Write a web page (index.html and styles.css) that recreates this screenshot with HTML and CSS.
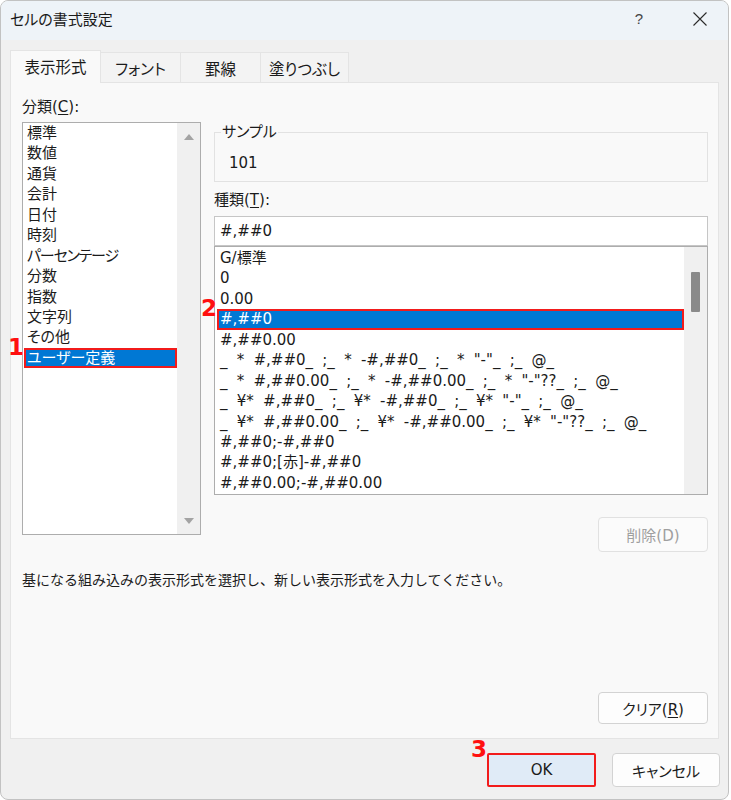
FILE: index.html
```html
<!DOCTYPE html>
<html lang="ja">
<head>
<meta charset="utf-8">
<title>セルの書式設定</title>
<link rel="stylesheet" href="styles.css">
</head>
<body>
<div class="window">
  <div class="titlebar">
    <div class="title">セルの書式設定</div>
    <div class="help">?</div>
    <svg class="close" viewBox="0 0 14 14" width="14" height="14"><path d="M0.5 0.5 L13.5 13.5 M13.5 0.5 L0.5 13.5" stroke="#2b2b2b" stroke-width="1.1" fill="none"/></svg>
  </div>
  <div class="tabs">
    <div class="tab active w1">表示形式</div>
    <div class="tab w2">フォント</div>
    <div class="tab w3">罫線</div>
    <div class="tab w4">塗りつぶし</div>
  </div>
  <div class="panel">
    <div class="main">
      <div class="leftcol">
        <div class="label">分類(<u>C</u>):</div>
        <div class="listbox left">
          <div class="items">
            <div class="item">標準</div>
            <div class="item">数値</div>
            <div class="item">通貨</div>
            <div class="item">会計</div>
            <div class="item">日付</div>
            <div class="item">時刻</div>
            <div class="item kana">パーセンテージ</div>
            <div class="item">分数</div>
            <div class="item">指数</div>
            <div class="item">文字列</div>
            <div class="item">その他</div>
            <div class="item selected"><span class="ann one">1</span>ユーザー定義</div>
          </div>
          <div class="scroll arrows">
            <span class="tri up"></span>
            <span class="tri down"></span>
          </div>
        </div>
      </div>
      <div class="rightcol">
        <div class="sample">
          <div class="legend">サンプル</div>
          <div class="sample-value">101</div>
        </div>
        <div class="label kind">種類(<u>T</u>):</div>
        <div class="input">#,##0</div>
        <div class="listbox fmt">
          <div class="items">
            <div class="item">G/標準</div>
            <div class="item">0</div>
            <div class="item">0.00</div>
            <div class="item selected"><span class="ann two">2</span>#,##0</div>
            <div class="item">#,##0.00</div>
            <div class="item">_ * #,##0_ ;_ * -#,##0_ ;_ * "-"_ ;_ @_</div>
            <div class="item">_ * #,##0.00_ ;_ * -#,##0.00_ ;_ * "-"??_ ;_ @_</div>
            <div class="item">_ ¥* #,##0_ ;_ ¥* -#,##0_ ;_ ¥* "-"_ ;_ @_</div>
            <div class="item">_ ¥* #,##0.00_ ;_ ¥* -#,##0.00_ ;_ ¥* "-"??_ ;_ @_</div>
            <div class="item">#,##0;-#,##0</div>
            <div class="item">#,##0;[赤]-#,##0</div>
            <div class="item">#,##0.00;-#,##0.00</div>
          </div>
          <div class="scroll">
            <span class="thumb"></span>
          </div>
        </div>
        <button class="btn disabled delete">削除(D)</button>
      </div>
    </div>
    <div class="desc">基になる組み込みの表示形式を選択し、新しい表示形式を入力してください。</div>
    <button class="btn clear">クリア(<u>R</u>)</button>
  </div>
  <div class="footer">
    <button class="btn ok"><span class="ann three">3</span>OK</button>
    <button class="btn cancel">キャンセル</button>
  </div>
</div>
</body>
</html>
```
FILE: styles.css
```css
* { box-sizing: border-box; }
html, body { margin: 0; padding: 0; }
body {
  background: #ffffff;
  font-family: "DejaVu Sans", "Noto Sans CJK JP", sans-serif;
  font-feature-settings: "palt";
  color: #1b1b1b;
  font-size: 15px;
}
.window {
  width: 729px;
  height: 800px;
  background: #f0f0f0;
  border: 1px solid #c2c2c2;
  border-radius: 8px;
  overflow: hidden;
  display: flex;
  flex-direction: column;
}
.titlebar {
  height: 39px;
  flex: none;
  background: #eef3f8;
  display: flex;
  align-items: center;
  padding: 0 0 4px 9px;
}
.title { flex: 1; font-size: 15px; color: #1a1a1a; }
.help { width: 20px; text-align: center; font-size: 15px; color: #444; margin-right: 44px; font-family: "Liberation Sans", sans-serif; }
.close { display: block; margin-right: 21px; }

.tabs {
  flex: none;
  display: flex;
  align-items: flex-end;
  margin-top: 10px;
  padding-left: 9px;
  height: 32px;
}
.tab {
  height: 30px;
  border: 1px solid #e4e4e4;
  border-bottom: none;
  background: #f3f3f3;
  display: flex;
  align-items: center;
  justify-content: center;
  font-size: 15.5px;
  margin-right: -1px;
}
.tab.active {
  height: 33px;
  margin-bottom: -1px;
  background: #f9f9f9;
  position: relative;
  z-index: 1;
  padding-bottom: 2px;
}
.w1 { width: 91px; }
.w2 { width: 81px; }
.w3 { width: 81px; }
.w4 { width: 89px; }

.panel {
  flex: none;
  margin: 0 9px;
  height: 657px;
  background: #f9f9f9;
  border: 1px solid #e4e4e4;
  padding: 14px 10px 14px 11px;
  display: flex;
  flex-direction: column;
}
.main {
  display: grid;
  grid-template-columns: 179px 494px;
  column-gap: 13px;
}
.label { line-height: 20px; height: 20px; font-size: 15px; }
.label u { text-underline-offset: 2px; }

.listbox {
  background: #fff;
  border: 1px solid #adadad;
  display: flex;
}
.listbox.left { margin-top: 5px; height: 413px; }
.items { flex: 1; min-width: 0; }
.left .items { padding: 0 0 0 1px; }
.fmt .items { padding: 1px 0 0 2px; }
.item {
  height: 20.45px;
  border: 2px solid transparent;
  padding-left: 1px;
  line-height: 16.45px;
  white-space: pre;
  font-size: 15px;
  position: relative;
}
.item.kana { letter-spacing: -1.2px; }
.fmt .item { word-spacing: 4.5px; }
.item.selected {
  background: #0078d4;
  color: #fff;
  border-color: #f21b1b;
}
.scroll {
  width: 23px;
  flex: none;
  background: #f0f0f0;
}
.scroll.arrows {
  display: flex;
  flex-direction: column;
  justify-content: space-between;
  align-items: center;
  padding: 11px 0 10px;
}
.tri { width: 0; height: 0; border-left: 5px solid transparent; border-right: 5px solid transparent; }
.tri.up { border-bottom: 6px solid #a3a3a3; }
.tri.down { border-top: 6px solid #a3a3a3; }
.thumb {
  display: block;
  width: 9px;
  height: 40px;
  margin: 25px 0 0 7px;
  background: #8a8a8a;
  border-radius: 1px;
}

.rightcol { display: flex; flex-direction: column; }
.sample {
  margin-top: 35px;
  border: 1px solid #e2e2e2;
  padding: 0 14px 8px;
}
.legend {
  width: fit-content;
  margin: -11px 0 0 -8px;
  padding: 0 1px;
  background: #f9f9f9;
  line-height: 20px;
  font-size: 15px;
}
.sample-value { margin-top: 11px; line-height: 20px; font-size: 15px; }
.kind { margin-top: 8px; }
.input {
  margin-top: 6px;
  height: 30px;
  border: 1px solid #c6c6c6;
  background: #fff;
  padding-left: 5px;
  line-height: 28px;
  font-size: 15px;
}
.listbox.fmt { height: 249px; }

.btn {
  font-family: inherit;
  font-feature-settings: "palt";
  font-size: 15px;
  color: #1b1b1b;
  background: #fdfdfd;
  border: 1px solid #d3d3d3;
  border-radius: 4px;
  padding: 0;
  position: relative;
}
.btn u { text-underline-offset: 2px; }
.delete {
  align-self: flex-end;
  margin-top: 22px;
  width: 110px;
  height: 35px;
}
.btn.disabled { color: #9f9f9f; border-color: #e1e1e1; background: #fbfbfb; }
.desc {
  margin-top: 18px;
  line-height: 20px;
  font-size: 14px;
  font-feature-settings: normal;
  color: #1b1b1b;
}
.clear {
  margin-top: auto;
  align-self: flex-end;
  width: 110px;
  height: 32px;
}
.footer {
  flex: none;
  display: flex;
  justify-content: flex-end;
  gap: 16px;
  margin-top: 14px;
  padding-right: 8px;
}
.ok {
  width: 109px;
  height: 34px;
  background: #e0ebf7;
  border: 2px solid #f21b1b;
  border-radius: 2px;
}
.cancel { width: 108px; height: 34px; }

.ann {
  position: absolute;
  top: -15px;
  font-family: "DejaVu Sans", sans-serif;
  font-weight: bold;
  font-size: 23px;
  line-height: 24px;
  color: #ff1010;
}
.ann.one { right: calc(100% + 2px); }
.ann.two { right: calc(100% + 2px); }
.ann.three { right: calc(100% + 2px); top: -18px; }
```
